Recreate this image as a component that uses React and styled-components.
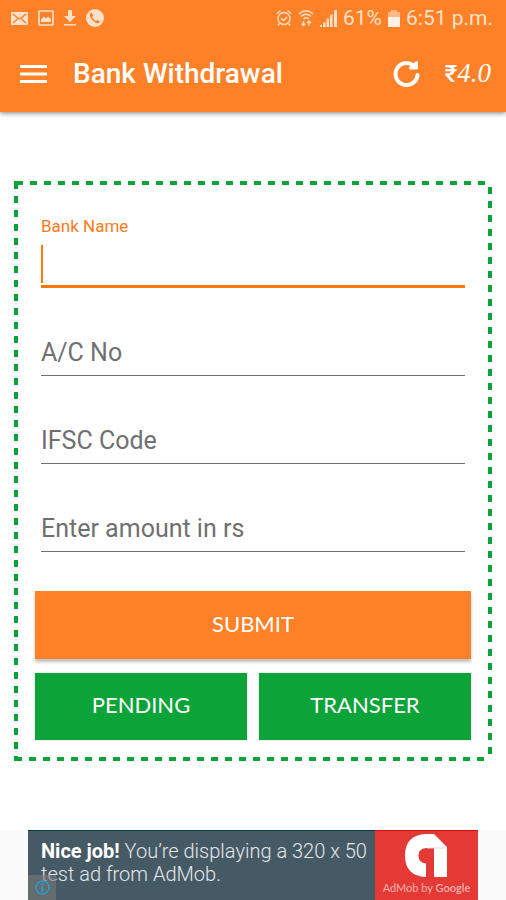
import React, { useState } from 'react'
import styled, { createGlobalStyle } from 'styled-components'

const orange = '#ff8127'
const green = '#0ca339'

const GlobalStyle = createGlobalStyle`
    * {
        box-sizing: border-box;
    }

    body {
        margin: 0;
        background: #fff;
        font-family: Roboto, "Liberation Sans", sans-serif;
    }

    svg {
        display: block;
    }
`

const Page = styled.div`
    display: flex;
    flex-direction: column;
    min-height: 100vh;
`

const Header = styled.header`
    background: ${orange};
    color: #fff;
    box-shadow: 0 1px 5px rgba(0, 0, 0, 0.5);
`

const StatusBar = styled.div`
    display: flex;
    justify-content: space-between;
    align-items: center;
    height: 36px;
    padding: 0 13px 0 11px;
    color: #ffe0cb;
    font-size: 21px;
`

const StatusGroup = styled.div`
    display: flex;
    align-items: center;
    gap: ${props => props.$gap};
`

const Toolbar = styled.div`
    display: flex;
    align-items: center;
    height: 76px;
    padding: 0 15px 0 20px;
`

const IconButton = styled.button`
    padding: 0;
    border: 0;
    background: none;
    color: inherit;
    cursor: pointer;
`

const Title = styled.h1`
    flex: 1;
    margin: 0 0 0 26px;
    font-size: 28px;
    font-weight: 500;
    line-height: 32px;
    white-space: nowrap;
`

const Balance = styled.span`
    display: flex;
    align-items: baseline;
    margin-left: 24px;
    padding-bottom: 2px;
    font-family: Roboto, "Noto Sans", sans-serif;
    font-size: 24px;
    font-weight: 500;
    line-height: 28px;
`

const Amount = styled.span`
    font-family: "Liberation Serif", serif;
    font-size: 27px;
    font-style: italic;
    font-weight: 400;
`

const Main = styled.main`
    flex: 1;
    display: flex;
    flex-direction: column;
    justify-content: center;
    padding: 32px 14px;
`

const dashes = (side, start) =>
    `repeating-linear-gradient(to ${side}, ${green} 0 7px, transparent 7px 14px) ${start} no-repeat`

const Form = styled.form`
    padding: 19px 21px 21px;
    background:
        ${dashes('right', '2px 0')},
        ${dashes('bottom', '100% 6px')},
        ${dashes('right', '1px 100%')},
        ${dashes('bottom', '0 1px')},
        linear-gradient(${green}, ${green}) 0 0 no-repeat,
        linear-gradient(${green}, ${green}) 0 100% no-repeat;
    background-size:
        calc(100% - 4px) 4px,
        4px calc(100% - 10px),
        calc(100% - 6px) 4px,
        4px calc(100% - 5px),
        4px 4px,
        4px 4px;
`

const Field = styled.div`
    display: grid;
    grid-template-rows: 36px 52px;
    margin: 0 6px;
`

const Label = styled.label`
    grid-column: 1;
    grid-row: ${props => props.$floating ? 1 : 2};
    align-self: end;
    color: ${props => props.$floating ? '#ff7a1a' : '#707070'};
    font-size: ${props => props.$floating ? '17px' : '25px'};
    line-height: ${props => props.$floating ? '20px' : '46px'};
    pointer-events: none;
`

const InputRow = styled.div`
    grid-column: 1;
    grid-row: 2;
    display: flex;
    align-items: flex-end;
    padding-bottom: ${props => props.$active ? '2px' : '4px'};
    border-bottom: ${props => props.$active ? '3px solid #ff7900' : '1px solid #707070'};
`

const Caret = styled.span`
    width: 2px;
    height: 38px;
    background: #ff7900;
`

const Input = styled.input`
    flex: 1;
    min-width: 0;
    height: 38px;
    padding: 0;
    border: 0;
    outline: 0;
    background: none;
    color: #333;
    caret-color: ${orange};
    font: 25px Roboto, "Liberation Sans", sans-serif;
`

const Button = styled.button`
    height: ${props => props.$primary ? '68px' : '67px'};
    padding: 0 0 4px;
    border: 0;
    background: ${props => props.$primary ? orange : green};
    box-shadow: ${props => props.$primary ? '0 3px 3px rgba(0, 0, 0, 0.25)' : '0 0 2px rgba(0, 0, 0, 0.2)'};
    color: #fff;
    font-family: Lato, "Open Sans", sans-serif;
    font-size: 22px;
    cursor: pointer;
`

const Buttons = styled.div`
    display: grid;
    grid-template-columns: 1fr 1fr;
    gap: 14px 12px;
    margin-top: 39px;

    > :first-child {
        grid-column: 1 / -1;
    }
`

const AdStrip = styled.aside`
    display: flex;
    padding: 0 28px;
    background: #fafafa;
`

const Ad = styled.a`
    position: relative;
    flex: 1;
    display: flex;
    background: #465a65;
    color: #e2e7ea;
    text-decoration: none;
`

const AdText = styled.p`
    flex: 1;
    margin: 0;
    padding: 9px 8px 14px 13px;
    border-top: 1px solid #073c48;
    font-size: 20px;
    font-weight: 300;
    line-height: 23px;

    strong {
        color: #fff;
        font-weight: 700;
    }
`

const AdLogo = styled.div`
    display: flex;
    flex-direction: column;
    align-items: center;
    width: 103px;
    padding-top: 3px;
    border-top: 1px solid #d90b0b;
    background: #e53935;
    color: #f7b3b0;
    font-family: Lato, sans-serif;
    font-size: 11px;
    line-height: 22px;
    white-space: nowrap;

    b {
        font-weight: 600;
    }
`

const AdInfo = styled.span`
    position: absolute;
    left: 0;
    bottom: 0;
    display: flex;
    align-items: center;
    justify-content: center;
    width: 28px;
    height: 25px;
    background: rgba(120, 120, 120, 0.6);
`

const MailIcon = () => (
    <svg width="17" height="13" viewBox="0 0 17 13">
        <rect width="17" height="13" rx="1" fill="#ffe0cb" />
        <path d="M2 2l5 4.2q1.5 1 3 0L15 2M2 11l4.5-4M15 11l-4.5-4" fill="none" stroke={orange} strokeWidth="1.5" />
    </svg>
)

const PictureIcon = () => (
    <svg width="16" height="16" viewBox="0 0 16 16" fill="#ffe0cb">
        <rect x="1" y="1" width="14" height="14" rx="1" fill="none" stroke="#ffe0cb" strokeWidth="1.7" />
        <path d="M3 12V9.500l3-3 2 2 2-2 3 3V12z" />
    </svg>
)

const DownloadIcon = () => (
    <svg width="12" height="16" viewBox="0 0 12 16" fill="#ffe0cb">
        <path d="M4 0h4v6h4l-6 6-6-6h4zM0 14h12v1.5H0z" />
    </svg>
)

const PhoneIcon = () => (
    <svg width="18" height="18" viewBox="0 0 18 18">
        <circle cx="9" cy="9" r="9" fill="#ffe0cb" />
        <path d="M5 4Q3 5.500 4.500 8.500T9.500 13.500Q12.500 15 14 13L11.500 10.800L10 12Q7 10.500 6 8L7.300 6.800L5.800 3.600Z" fill={orange} />
    </svg>
)

const AlarmIcon = () => (
    <svg width="16" height="18" viewBox="0 0 16 18" fill="none" stroke="#ffe0cb" strokeWidth="1.4">
        <circle cx="8" cy="9.500" r="6" />
        <path d="M1 4.500l3.500-3M15 4.500l-3.500-3M3.500 14.500l-1.500 2M12.500 14.500l1.500 2M5 9.500l2.500 2L11 8" />
    </svg>
)

const WifiIcon = () => (
    <svg width="16" height="18" viewBox="0 0 16 18" fill="none" stroke="#ffe0cb" strokeWidth="1.5">
        <path d="M1 5q7-6.500 14 0M3 7.500q5-4.500 10 0M5.500 10q2.500-2.500 5 0" />
        <path d="M5.500 12v5M3.500 14.500l2 2 2-2M11 17v-5M9 14l2-2 2 2" strokeWidth="1.3" />
    </svg>
)

const SignalIcon = () => (
    <svg width="17" height="17" viewBox="0 0 17 17" fill="#ffe0cb">
        <path d="M0 15h2v2H0zM3 12.500h2.500V17H3zM6.500 8.500H9V17H6.500zM10 4.500h2.500V17H10zM14 0h3v17h-3z" />
    </svg>
)

const BatteryIcon = () => (
    <svg width="12" height="17" viewBox="0 0 12 17">
        <path d="M3 0h6v2h3v6H0V2h3z" fill="#ffb887" />
        <path d="M0 7h12v10H0z" fill="#fff0e6" />
    </svg>
)

const MenuIcon = () => (
    <svg width="27" height="18" viewBox="0 0 27 18" fill="#fff">
        <path d="M0 0h27v3H0zM0 7.500h27v3H0zM0 15h27v3H0z" />
    </svg>
)

const RefreshIcon = () => (
    <svg width="28" height="28" viewBox="0 0 28 28" fill="none" stroke="#fff" strokeWidth="4" strokeLinecap="round" strokeLinejoin="round">
        <path d="M24.500 15A11 11 0 1 1 20.500 5.500" />
        <path d="M23.500 2.500V8H17.500L20 6Z" fill="#fff" strokeWidth="3" />
    </svg>
)

const AdMobIcon = () => (
    <svg width="43" height="43" viewBox="0 0 43 43">
        <path d="M21 0H29L42 13V43H29V14H22Q13.500 14 13.500 21.500Q13.500 29 21 29.500V43Q0 42 0 21.500Q0 1 21 0Z" fill="#fff" />
        <path d="M22 14H41" stroke="#ddd" strokeWidth="1" />
    </svg>
)

const InfoIcon = () => (
    <svg width="15" height="15" viewBox="0 0 15 15" fill="none" stroke="#2b9bc9" strokeWidth="1.6">
        <circle cx="7.500" cy="7.500" r="6.500" />
        <path d="M7.500 3v2M7.500 6v6" strokeWidth="2" />
    </svg>
)

const fields = [
    { id: 'bank', label: 'Bank Name' },
    { id: 'account', label: 'A/C No' },
    { id: 'ifsc', label: 'IFSC Code' },
    { id: 'amount', label: 'Enter amount in rs' }
]

const TextField = (props) => {
    const [value, setValue] = useState('')

    return (
        <Field>
            <Label htmlFor={props.id} $floating={props.active || value !== ''}>
                {props.label}
            </Label>
            <InputRow $active={props.active}>
                {props.active && value === '' && <Caret />}
                <Input
                    id={props.id}
                    value={value}
                    onChange={e => setValue(e.target.value)}
                    onFocus={props.onFocus}
                />
            </InputRow>
        </Field>
    )
}

const App = () => {
    const [active, setActive] = useState('bank')

    const Fields = fields.map(field => {
        return (
            <TextField
                key={field.id}
                id={field.id}
                label={field.label}
                active={active === field.id}
                onFocus={() => setActive(field.id)}
            />
        )
    })

    return (
        <Page>
            <GlobalStyle />
            <Header>
                <StatusBar>
                    <StatusGroup $gap="10px">
                        <MailIcon />
                        <PictureIcon />
                        <DownloadIcon />
                        <PhoneIcon />
                    </StatusGroup>
                    <StatusGroup $gap="6px">
                        <AlarmIcon />
                        <WifiIcon />
                        <SignalIcon />
                        <span>61%</span>
                        <BatteryIcon />
                        <time>6:51 p.m.</time>
                    </StatusGroup>
                </StatusBar>
                <Toolbar>
                    <IconButton type="button" aria-label="Menu">
                        <MenuIcon />
                    </IconButton>
                    <Title>Bank Withdrawal</Title>
                    <IconButton type="button" aria-label="Refresh">
                        <RefreshIcon />
                    </IconButton>
                    <Balance>₹<Amount>4.0</Amount></Balance>
                </Toolbar>
            </Header>
            <Main>
                <Form onSubmit={e => e.preventDefault()}>
                    {Fields}
                    <Buttons>
                        <Button type="submit" $primary>SUBMIT</Button>
                        <Button type="button">PENDING</Button>
                        <Button type="button">TRANSFER</Button>
                    </Buttons>
                </Form>
            </Main>
            <AdStrip>
                <Ad href="#">
                    <AdText>
                        <strong>Nice job!</strong> You’re displaying a 320 x 50 test ad from AdMob.
                    </AdText>
                    <AdLogo>
                        <AdMobIcon />
                        <span>AdMob by <b>Google</b></span>
                    </AdLogo>
                    <AdInfo>
                        <InfoIcon />
                    </AdInfo>
                </Ad>
            </AdStrip>
        </Page>
    )
}

export default App
